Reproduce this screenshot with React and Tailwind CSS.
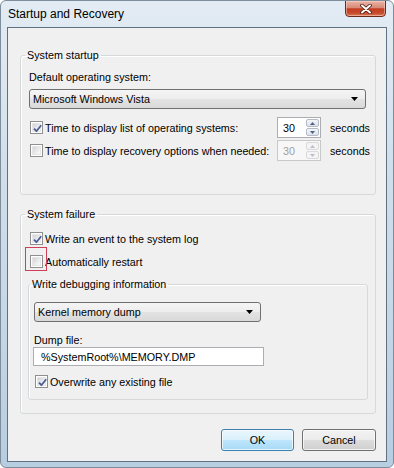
import React from 'react';

const font = { fontFamily: '"Liberation Sans", Arial, sans-serif' };

function CheckBox({ checked }) {
  return (
    <span className="relative w-[13px] h-[13px] shrink-0 border border-[#8f8f8f] bg-white p-[1px] flex">
      <span className="flex-1 border border-[#e6e6e6] bg-[linear-gradient(135deg,#cfd2d6_0%,#e9eaec_55%,#fbfbfb_100%)]" />
      {checked && (
        <svg className="absolute left-[1px] top-[1px]" width="11" height="11" viewBox="0 0 11 11">
          <path d="M2 5.6 L4.4 8.2 L9.2 2.2" fill="none" stroke="#4b5d94" strokeWidth="1.8" strokeLinejoin="round" />
        </svg>
      )}
    </span>
  );
}

function Dropdown({ value, className }) {
  return (
    <div className={`h-[20px] flex items-center pl-[3px] pr-[7px] border border-[#707070] rounded-[3px] bg-[linear-gradient(to_bottom,#f5f5f5_0%,#ededed_50%,#e3e3e3_51%,#d9d9d9_100%)] ${className}`}>
      <span className="flex-1 leading-[14px]">{value}</span>
      <svg width="7" height="4" viewBox="0 0 7 4">
        <path d="M0 0 H7 L3.5 4 Z" fill="#000" />
      </svg>
    </div>
  );
}

function Spinner({ value, disabled }) {
  const arrow = disabled ? '#b9c1cc' : '#4d6185';
  return (
    <div className={`w-[44px] h-[21px] flex border ${disabled ? 'border-[#c9c9c9] bg-[#f7f7f7] text-[#a0a0a0]' : 'border-[#abadb3] bg-white'}`}>
      <span className="flex-1 pl-[5px] flex items-center leading-[14px]">{value}</span>
      <span className="w-[15px] flex flex-col gap-[1px] p-[1px]">
        {[0, 1].map((i) => (
          <span
            key={i}
            className={`flex-1 flex items-center justify-center rounded-[2px] border ${disabled ? 'border-[#dadada] bg-[#f4f4f4]' : 'border-[#b5bcc7] bg-[linear-gradient(to_bottom,#f3f5f8,#dde3ea)]'}`}
          >
            <svg width="5" height="3" viewBox="0 0 5 3">
              <path d={i === 0 ? 'M0 3 L2.5 0 L5 3 Z' : 'M0 0 L5 0 L2.5 3 Z'} fill={arrow} />
            </svg>
          </span>
        ))}
      </span>
    </div>
  );
}

function Group({ title, className, children }) {
  return (
    <fieldset className={`border border-[#d5d9dc] rounded-[3px] shadow-[inset_1px_1px_0_#ffffff] ${className}`}>
      <legend className="px-[2px] -ml-[4px] leading-[14px]">{title}</legend>
      {children}
    </fieldset>
  );
}

export default function App() {
  return (
    <div
      style={font}
      className="w-[394px] h-[468px] flex flex-col rounded-[6px] border border-[#7d8d9c] bg-[linear-gradient(to_bottom,#e3ecf4_0%,#d2dfea_35%,#c3d5e5_75%,#b7cde0_100%)] text-[10.75px] text-black overflow-hidden"
    >
      {/* title bar */}
      <div className="h-[26px] flex items-start">
        <span className="flex-1 pl-[7px] pt-[6px] text-[12px] leading-[14px]">Startup and Recovery</span>
        <div className="w-[41px] h-[17px] mr-[7px] -mt-[1px] flex items-center justify-center rounded-b-[4px] border border-[#6b2a20] bg-[linear-gradient(to_bottom,#eab3a6_0%,#d98a76_45%,#c23d20_52%,#c54a2d_80%,#dc7a58_100%)] shadow-[inset_0_0_0_1px_rgba(255,220,210,0.5)]">
          <svg width="12" height="10" viewBox="0 0 12 10">
            <path d="M2 1.5 L10 8.5 M10 1.5 L2 8.5" stroke="#4a1a12" strokeWidth="3.6" strokeLinecap="round" />
            <path d="M2 1.5 L10 8.5 M10 1.5 L2 8.5" stroke="#ffffff" strokeWidth="2" strokeLinecap="round" />
          </svg>
        </div>
      </div>

      {/* client area */}
      <div className="mx-[6px] h-[435px] border border-[#5f7183] bg-[#f0f0f0] flex flex-col pt-[20px] pl-[12px] pr-[10px]">
        <Group title="System startup" className="pl-[8px] pr-[5px] pb-[33px]">
          <div className="pt-[8px] leading-[14px]">Default operating system:</div>
          <Dropdown value="Microsoft Windows Vista" className="mt-[5px] mr-[4px]" />
          <div className="mt-[8px] h-[21px] flex items-center">
            <span className="ml-[1px]"><CheckBox checked /></span>
            <span className="ml-[2px] flex-1 leading-[14px]">Time to display list of operating systems:</span>
            <Spinner value="30" />
            <span className="ml-[9px] leading-[14px]">seconds</span>
          </div>
          <div className="mt-[2px] h-[21px] flex items-center">
            <span className="ml-[1px]"><CheckBox /></span>
            <span className="ml-[2px] flex-1 leading-[14px]">Time to display recovery options when needed:</span>
            <Spinner value="30" disabled />
            <span className="ml-[9px] leading-[14px]">seconds</span>
          </div>
        </Group>

        <Group title="System failure" className="mt-[12px] pl-[8px] pr-[7px] pb-[13px]">
          <div className="mt-[9px] h-[17px] flex items-center">
            <span className="ml-[1px]"><CheckBox checked /></span>
            <span className="ml-[2px] leading-[14px]">Write an event to the system log</span>
          </div>
          <div className="mt-[6px] h-[17px] flex items-center">
            <span className="ml-[1px] relative">
              <CheckBox />
              <span className="absolute -left-[5px] -top-[8px] w-[22px] h-[24px] border border-[#cf3f58]" />
            </span>
            <span className="ml-[2px] leading-[14px]">Automatically restart</span>
          </div>

          <Group title="Write debugging information" className="mt-[7px] -ml-[1px] pl-[5px] pb-[9px]">
            <Dropdown value="Kernel memory dump" className="mt-[11px] w-[227px]" />
            <div className="mt-[11px] leading-[14px]">Dump file:</div>
            <div className="w-[231px] -ml-[1px] h-[19px] flex items-center pl-[7px] border border-[#abadb3] bg-white leading-[14px]">
              %SystemRoot%\MEMORY.DMP
            </div>
            <div className="mt-[7px] h-[17px] flex items-center">
              <span className="ml-[1px]"><CheckBox checked /></span>
              <span className="ml-[2px] leading-[14px]">Overwrite any existing file</span>
            </div>
          </Group>
        </Group>

        <div className="mt-[15px] flex justify-end gap-[8px]">
          <button className="w-[73px] h-[22px] rounded-[3px] border border-[#3c7fb1] bg-[linear-gradient(to_bottom,#eaf6fd_0%,#d9f0fc_50%,#bee6fd_51%,#a7d9f5_100%)] shadow-[inset_0_0_0_1px_rgba(255,255,255,0.7)] leading-[14px]">
            OK
          </button>
          <button className="w-[74px] h-[22px] rounded-[3px] border border-[#707070] bg-[linear-gradient(to_bottom,#f2f2f2_0%,#ebebeb_50%,#dddddd_51%,#cfcfcf_100%)] shadow-[inset_0_0_0_1px_rgba(255,255,255,0.7)] leading-[14px]">
            Cancel
          </button>
        </div>
      </div>
    </div>
  );
}
